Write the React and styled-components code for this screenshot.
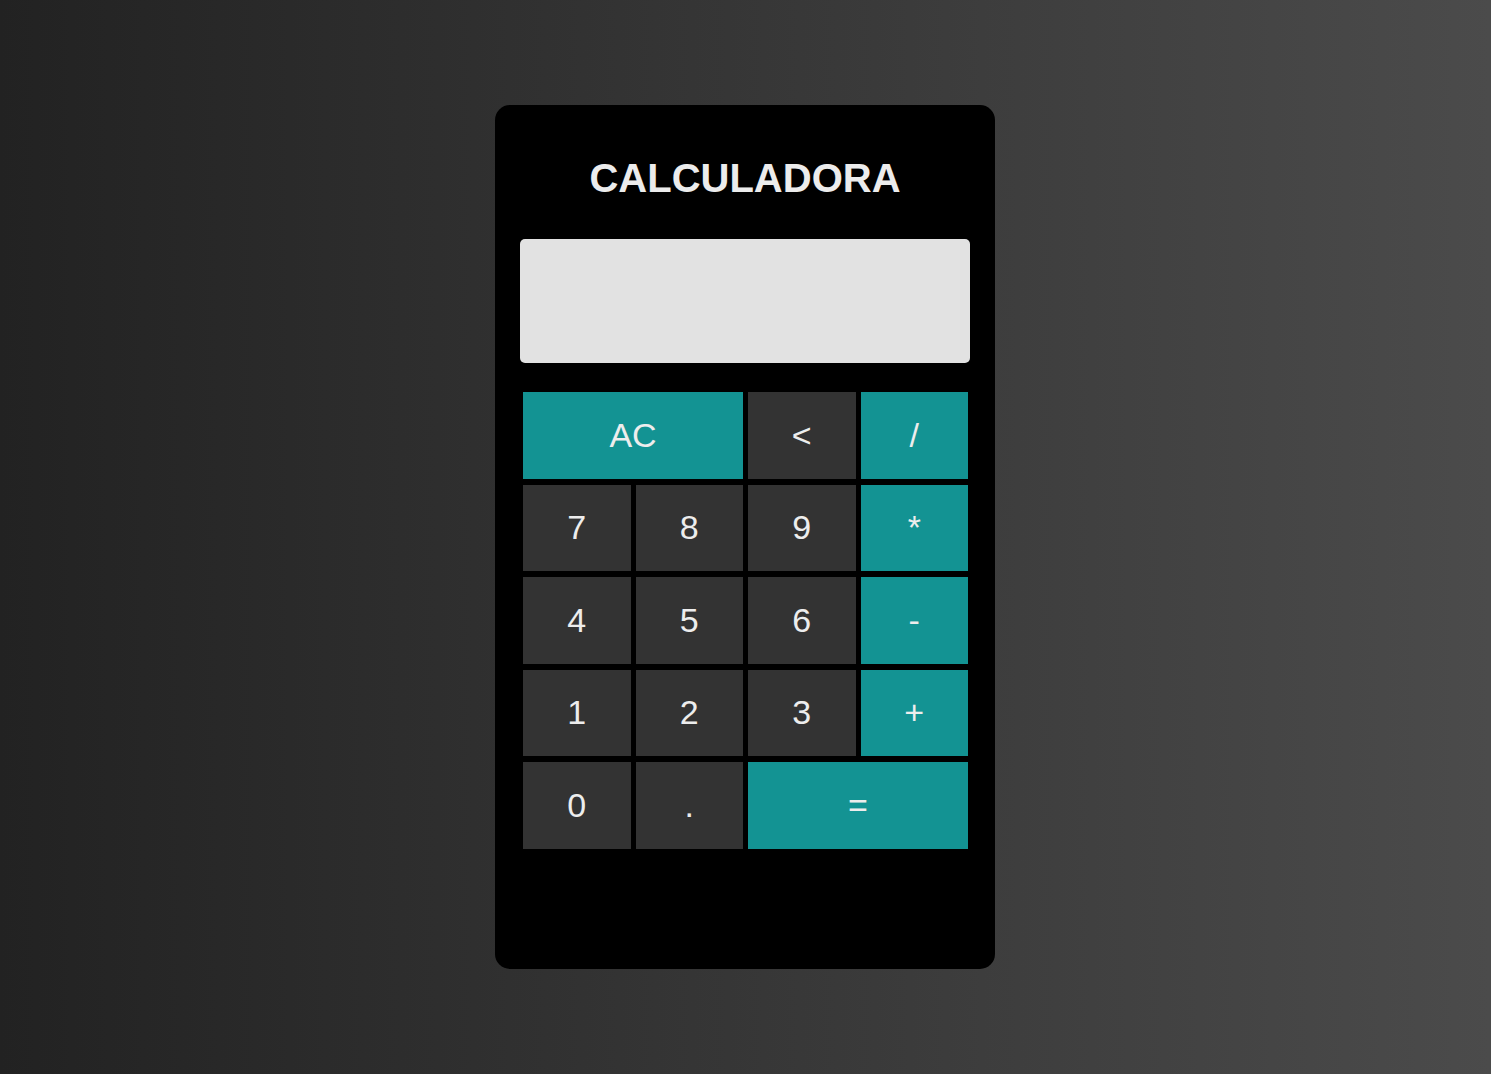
import styled, { createGlobalStyle } from "styled-components";

const GlobalStyle = createGlobalStyle`
  * {
    box-sizing: border-box;
  }
  body {
    margin: 0;
    font-family: "Liberation Sans", Arial, sans-serif;
  }
`;

const Page = styled.div`
  min-height: 100vh;
  display: flex;
  align-items: center;
  justify-content: center;
  background: linear-gradient(to right, #222222, #4b4b4b);
`;

const Card = styled.div`
  width: 500px;
  height: 864px;
  margin-right: 1px;
  background: #000;
  border-radius: 15px;
  padding: 50px 25px 0 25px;
  display: flex;
  flex-direction: column;
`;

const Title = styled.h1`
  margin: 0 0 38px 0;
  height: 46px;
  line-height: 46px;
  font-size: 40px;
  font-weight: 700;
  text-align: center;
  color: #ececec;
`;

const Display = styled.div`
  height: 124px;
  background: #e2e2e2;
  border-radius: 5px;
  margin-bottom: 29px;
`;

const Keys = styled.div`
  display: grid;
  grid-template-columns: repeat(4, 1fr);
  grid-auto-rows: 86.5px;
  row-gap: 6px;
  column-gap: 5px;
  padding: 0 2px 0 3px;
`;

const Key = styled.button`
  border: none;
  margin: 0;
  padding: 0;
  font-family: "Liberation Sans", Arial, sans-serif;
  font-size: 34px;
  color: #ededed;
  background: ${({ $op }) => ($op ? "#139393" : "#333333")};
  grid-column: span ${({ $span }) => $span || 1};
  cursor: pointer;
`;

const keys = [
  { label: "AC", op: true, span: 2 },
  { label: "<" },
  { label: "/", op: true },
  { label: "7" },
  { label: "8" },
  { label: "9" },
  { label: "*", op: true },
  { label: "4" },
  { label: "5" },
  { label: "6" },
  { label: "-", op: true },
  { label: "1" },
  { label: "2" },
  { label: "3" },
  { label: "+", op: true },
  { label: "0" },
  { label: "." },
  { label: "=", op: true, span: 2 },
];

const App = () => {
  return (
    <>
      <GlobalStyle />
      <Page>
        <Card>
          <Title>CALCULADORA</Title>
          <Display />
          <Keys>
            {keys.map((k) => (
              <Key key={k.label} $op={k.op} $span={k.span}>
                {k.label}
              </Key>
            ))}
          </Keys>
        </Card>
      </Page>
    </>
  );
};

export default App;
